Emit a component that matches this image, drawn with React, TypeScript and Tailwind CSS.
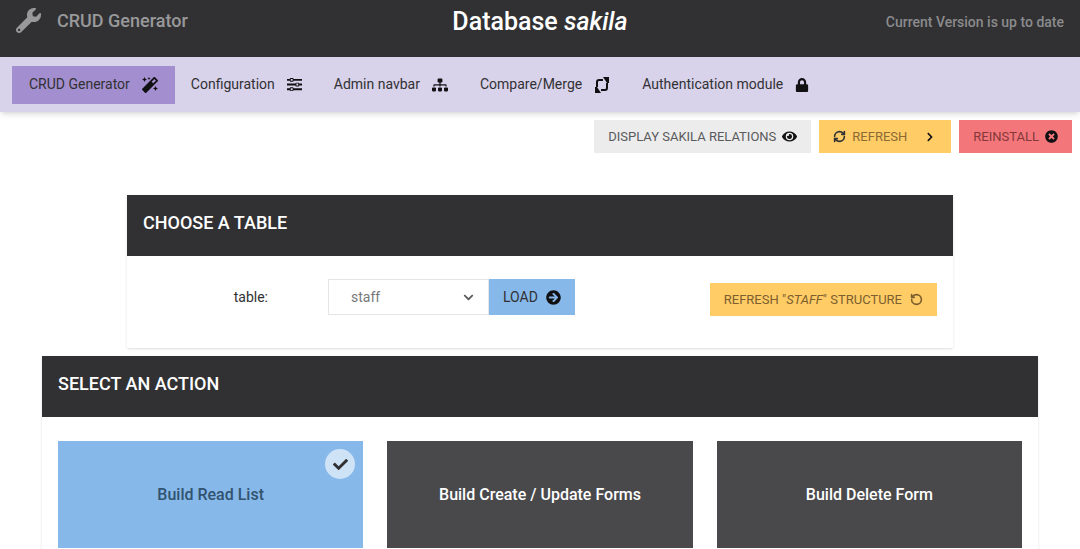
import type { ReactNode } from "react";
import {
  FaArrowCircleRight,
  FaCheck,
  FaChevronDown,
  FaChevronRight,
  FaEye,
  FaLock,
  FaMagic,
  FaSitemap,
  FaTimesCircle,
  FaWrench,
} from "react-icons/fa";
import { ImEqualizer } from "react-icons/im";
import { LuRefreshCw, LuRotateCcw } from "react-icons/lu";

function MergeIcon() {
  return (
    <svg width="16" height="16" viewBox="0 0 16 16" fill="none" stroke="currentColor" strokeWidth="2" aria-hidden="true">
      <path d="M3 10V5q0-2 2-2h4M13 6v5q0 2-2 2H7" />
      <path d="M9 0h6v6h-2zM7 16H1v-6h2z" fill="currentColor" stroke="none" />
    </svg>
  );
}

const navItems: { label: string; icon: ReactNode; active?: boolean }[] = [
  { label: "CRUD Generator", icon: <FaMagic size={16} />, active: true },
  { label: "Configuration", icon: <ImEqualizer size={15} /> },
  { label: "Admin navbar", icon: <FaSitemap size={16} /> },
  { label: "Compare/Merge", icon: <MergeIcon /> },
  { label: "Authentication module", icon: <FaLock size={14} /> },
];

const actions = [
  { label: "Build Read List", selected: true },
  { label: "Build Create / Update Forms", selected: false },
  { label: "Build Delete Form", selected: false },
];

function PanelTitle({ children }: { children: ReactNode }) {
  return (
    <h2 className="h-[61px] bg-[#313133] px-4 pt-4 text-[18px] leading-6 font-medium text-white uppercase">
      {children}
    </h2>
  );
}

export default function App() {
  return (
    <div className="min-h-screen overflow-hidden bg-white font-['Roboto',sans-serif] text-[#313133]">
      <header className="grid h-[57px] grid-cols-3 bg-[#313133] px-4 pt-2">
        <a href="#home" className="flex h-6 items-center gap-4 text-[18px] font-medium text-[#99999b]">
          <FaWrench size={25} />
          CRUD Generator
        </a>
        <h1 className="text-center text-[25px] leading-7 font-medium text-white">
          Database <em>sakila</em>
        </h1>
        <p className="text-right text-[14px] leading-7 font-medium text-[#8b8b8d]">Current Version is up to date</p>
      </header>

      <nav className="flex h-[55px] items-center bg-[#d9d2eb] px-3 shadow-md">
        {navItems.map((item) => (
          <a
            key={item.label}
            href="#section"
            className={
              item.active
                ? "flex h-[38px] items-center gap-3 bg-[#a38fcf] px-[17px] text-[14px]"
                : "flex h-[38px] items-center gap-3 px-4 text-[14px]"
            }
          >
            {item.label}
            <span className="text-[#111113]">{item.icon}</span>
          </a>
        ))}
      </nav>

      <div className="flex justify-end gap-2 px-2 pt-2 text-[13px]">
        <button className="flex h-[33px] items-center gap-1.5 bg-[#ececec] px-3.5 text-[#5a5a5c] uppercase">
          Display sakila relations <FaEye size={15} className="text-[#111113]" />
        </button>
        <button className="flex h-[33px] items-center gap-1.5 bg-[#ffcc66] px-3.5 text-[#8b6a33] uppercase">
          <LuRefreshCw size={13} strokeWidth={3} className="text-[#313133]" /> Refresh
          <FaChevronRight size={10} className="mr-0.5 ml-3 text-[#111113]" />
        </button>
        <button className="flex h-[33px] items-center gap-1.5 bg-[#f3777a] px-3.5 text-[#85383b] uppercase">
          Reinstall <FaTimesCircle size={13} className="text-[#111113]" />
        </button>
      </div>

      <main className="pt-[42px]">
        <section className="mx-[127px] bg-white shadow">
          <PanelTitle>Choose a table</PanelTitle>
          <div className="flex h-[92px] items-start px-4 pt-[23px] text-[14px]">
            <label htmlFor="table" className="w-[125px] text-right leading-9">
              table:
            </label>
            <div className="ml-[60px] grid w-[161px] items-center">
              <select
                id="table"
                defaultValue="staff"
                className="col-start-1 row-start-1 h-9 w-full appearance-none border border-[#e5e5e5] bg-white px-[22px] text-[#77777a]"
              >
                <option>staff</option>
              </select>
              <FaChevronDown size={11} className="pointer-events-none col-start-1 row-start-1 mr-[15px] justify-self-end text-[#5a5a5c]" />
            </div>
            <button className="flex h-9 items-center gap-2 bg-[#87b8ea] px-3.5 uppercase">
              Load <FaArrowCircleRight size={15} className="text-[#111113]" />
            </button>
            <button className="mt-1 ml-auto flex h-[33px] items-center gap-2 bg-[#ffcc66] px-3.5 text-[13px] text-[#7c5e2f] uppercase">
              <span>
                Refresh "<em>staff</em>" structure
              </span>
              <LuRotateCcw size={13} strokeWidth={3} />
            </button>
          </div>
        </section>

        <section className="mx-[42px] mt-2 bg-white shadow">
          <PanelTitle>Select an action</PanelTitle>
          <div className="grid grid-cols-3 gap-6 px-4 py-6">
            {actions.map((action) => (
              <button
                key={action.label}
                className={
                  action.selected
                    ? "relative h-[107px] bg-[#87b8ea] text-[16px] font-medium text-[#31536f]"
                    : "relative h-[107px] bg-[#49494c] text-[16px] font-medium text-white"
                }
              >
                {action.label}
                {action.selected && (
                  <span className="absolute top-2 right-2 flex size-[30px] items-center justify-center rounded-full bg-[#cfe3f7] text-[#313133]">
                    <FaCheck size={15} />
                  </span>
                )}
              </button>
            ))}
          </div>
        </section>
      </main>
    </div>
  );
}
